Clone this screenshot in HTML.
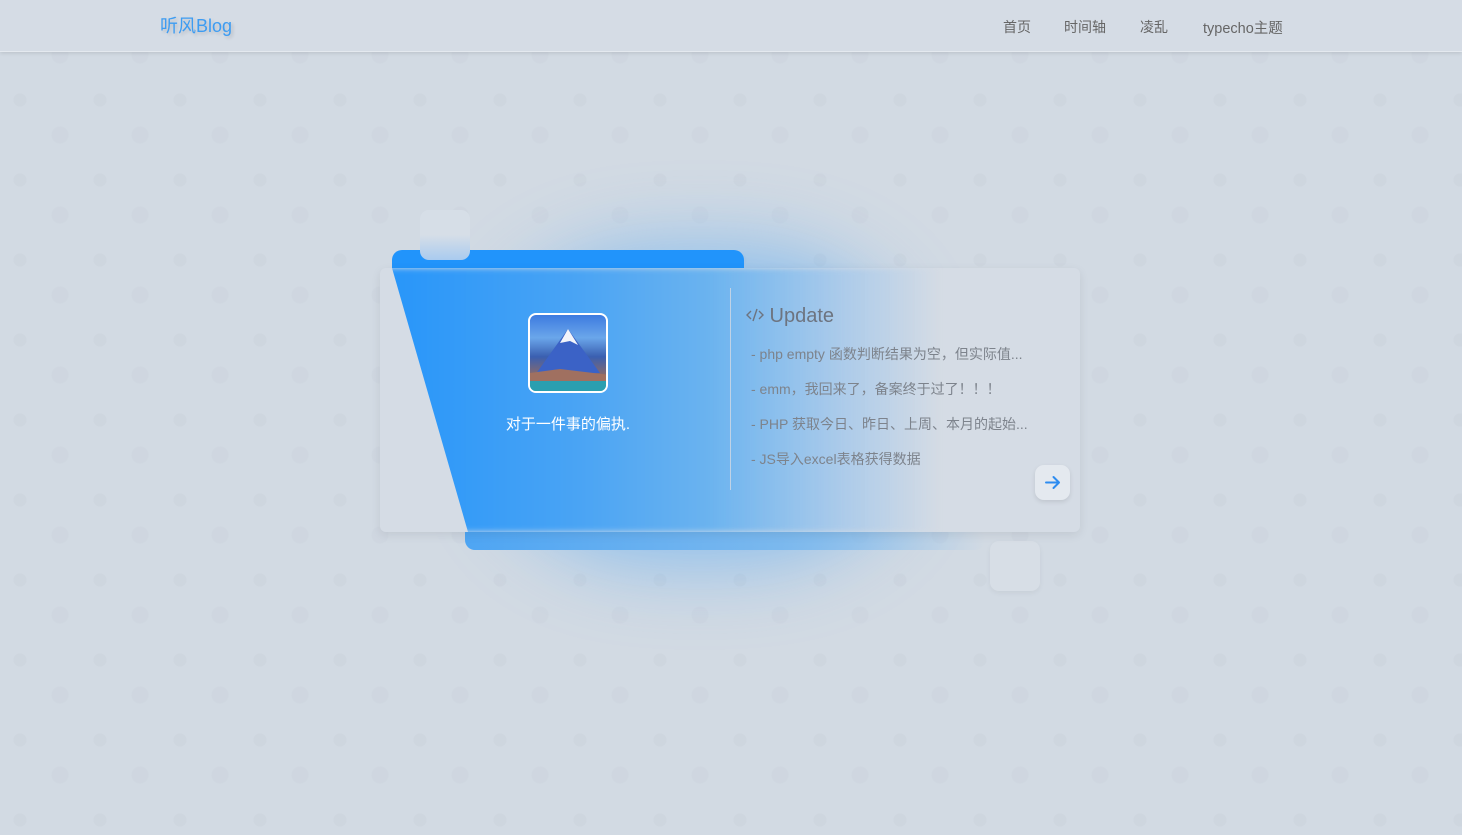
<!DOCTYPE html>
<html><head><meta charset="utf-8">
<style>
*{margin:0;padding:0;box-sizing:border-box}
html,body{width:1462px;height:835px;overflow:hidden}
body{background:#d2dae3;font-family:"Liberation Sans","Noto Sans CJK SC",sans-serif;position:relative;
background-image:radial-gradient(circle at 20px 20px, rgba(150,160,175,.08) 6px, transparent 7px),radial-gradient(circle at 60px 55px, rgba(150,160,175,.06) 8px, transparent 9px);
background-size:80px 80px,80px 80px}
.nav{position:absolute;left:0;top:0;width:1462px;height:52px;background:#d5dce5;box-shadow:0 1px 4px rgba(0,0,0,.12);border-bottom:1px solid #e4e9ef}
.logo{position:absolute;left:160px;top:12px;font-size:18px;color:#3d9cf2;text-shadow:2px 2px 3px rgba(0,0,0,.15)}
.menu{position:absolute;top:17px;font-size:14px;color:#666}
.glow{position:absolute;left:500px;top:250px;width:400px;height:310px;background:rgba(40,150,250,.45);filter:blur(40px);border-radius:40%}
.tab1{position:absolute;left:392px;top:250px;width:352px;height:40px;background:#2194fb;border-radius:10px 10px 0 0}
.tab2{position:absolute;left:465px;top:510px;width:520px;height:40px;background:linear-gradient(90deg,#4ea5f3,#7ab8ee 60%,rgba(160,200,235,0));border-radius:0 0 10px 10px}
.sq1{position:absolute;left:420px;top:210px;width:50px;height:50px;border-radius:9px;background:linear-gradient(#d6dee7 50%,#a9cbef);}
.sq2{position:absolute;left:990px;top:541px;width:50px;height:50px;border-radius:9px;background:#d7dee6;box-shadow:0 2px 6px rgba(0,0,0,.05)}
.card{position:absolute;left:380px;top:268px;width:700px;height:264px;background:#d5dce5;border-radius:6px;box-shadow:0 3px 10px rgba(0,0,0,.08);overflow:hidden}
.blue{position:absolute;left:0;top:0;width:700px;height:264px;clip-path:polygon(12px 0,700px 0,700px 264px,88px 264px);background:linear-gradient(90deg,#2695fa 0px,#4aa4f4 200px,#6bb3ef 330px,rgba(160,198,235,.8) 460px,rgba(213,220,229,0) 560px);filter:blur(3px)}
.div{position:absolute;left:350px;top:20px;width:1px;height:202px;background:#c0d2e6}
.av{position:absolute;left:148px;top:45px;width:80px;height:80px;border:2px solid #fff;border-radius:8px;overflow:hidden;background:linear-gradient(180deg,#3d7be0 0,#6aa6ea 30%,#3a5fb0 55%,#8a6a6a 80%,#2aa0b8 100%)}
.motto{position:absolute;left:0;width:376px;top:145px;text-align:center;color:#fff;font-size:15px}
.upd{position:absolute;left:366px;top:37px;font-size:20px;color:#6d7480}
.li{position:absolute;left:371px;font-size:14px;color:#7d838c}
.btn{position:absolute;left:655px;top:197px;width:35px;height:35px;border-radius:9px;background:#e4e9ef;box-shadow:0 2px 5px rgba(0,0,0,.1)}
</style></head><body>
<div class="nav">
<div class="logo">听风Blog</div>
<div class="menu" style="left:1003px">首页</div>
<div class="menu" style="left:1064px">时间轴</div>
<div class="menu" style="left:1140px">凌乱</div>
<div class="menu" style="left:1203px;font-size:14.5px">typecho主题</div>
</div>
<div class="glow"></div>
<div class="tab1"></div>
<div class="tab2"></div>
<div class="sq1"></div>
<div class="sq2"></div>
<div class="card">
<div class="blue"></div>
<div class="div"></div>
<div class="av"><svg width="80" height="80" viewBox="0 0 80 80"><polygon points="5,60 38,14 70,58" fill="#3b62c6"/><polygon points="30,28 38,14 48,30 40,26" fill="#f2f4fa"/><rect x="0" y="62" width="80" height="18" fill="#2a9fb0"/><polygon points="0,58 30,54 80,60 80,66 0,66" fill="#a07060"/></svg></div>
<div class="motto">对于一件事的偏执.</div>
<div class="upd"><svg width="18" height="16" viewBox="0 0 18 16" style="vertical-align:-1px"><path d="M5 4 L1 8 L5 12 M13 4 L17 8 L13 12 M11 2 L7 14" stroke="#6d7480" stroke-width="1.4" fill="none"/></svg> Update</div>
<div class="li" style="top:76px">- php empty 函数判断结果为空，但实际值...</div>
<div class="li" style="top:111px">- emm，我回来了，备案终于过了！！！</div>
<div class="li" style="top:146px">- PHP 获取今日、昨日、上周、本月的起始...</div>
<div class="li" style="top:181px">- JS导入excel表格获得数据</div>
<div class="btn"><svg width="35" height="35" viewBox="0 0 35 35"><path d="M11 17.5 H24 M18.5 12 L24 17.5 L18.5 23" stroke="#2d8cf0" stroke-width="2" fill="none" stroke-linecap="round" stroke-linejoin="round"/></svg></div>
</div>
</body></html>
